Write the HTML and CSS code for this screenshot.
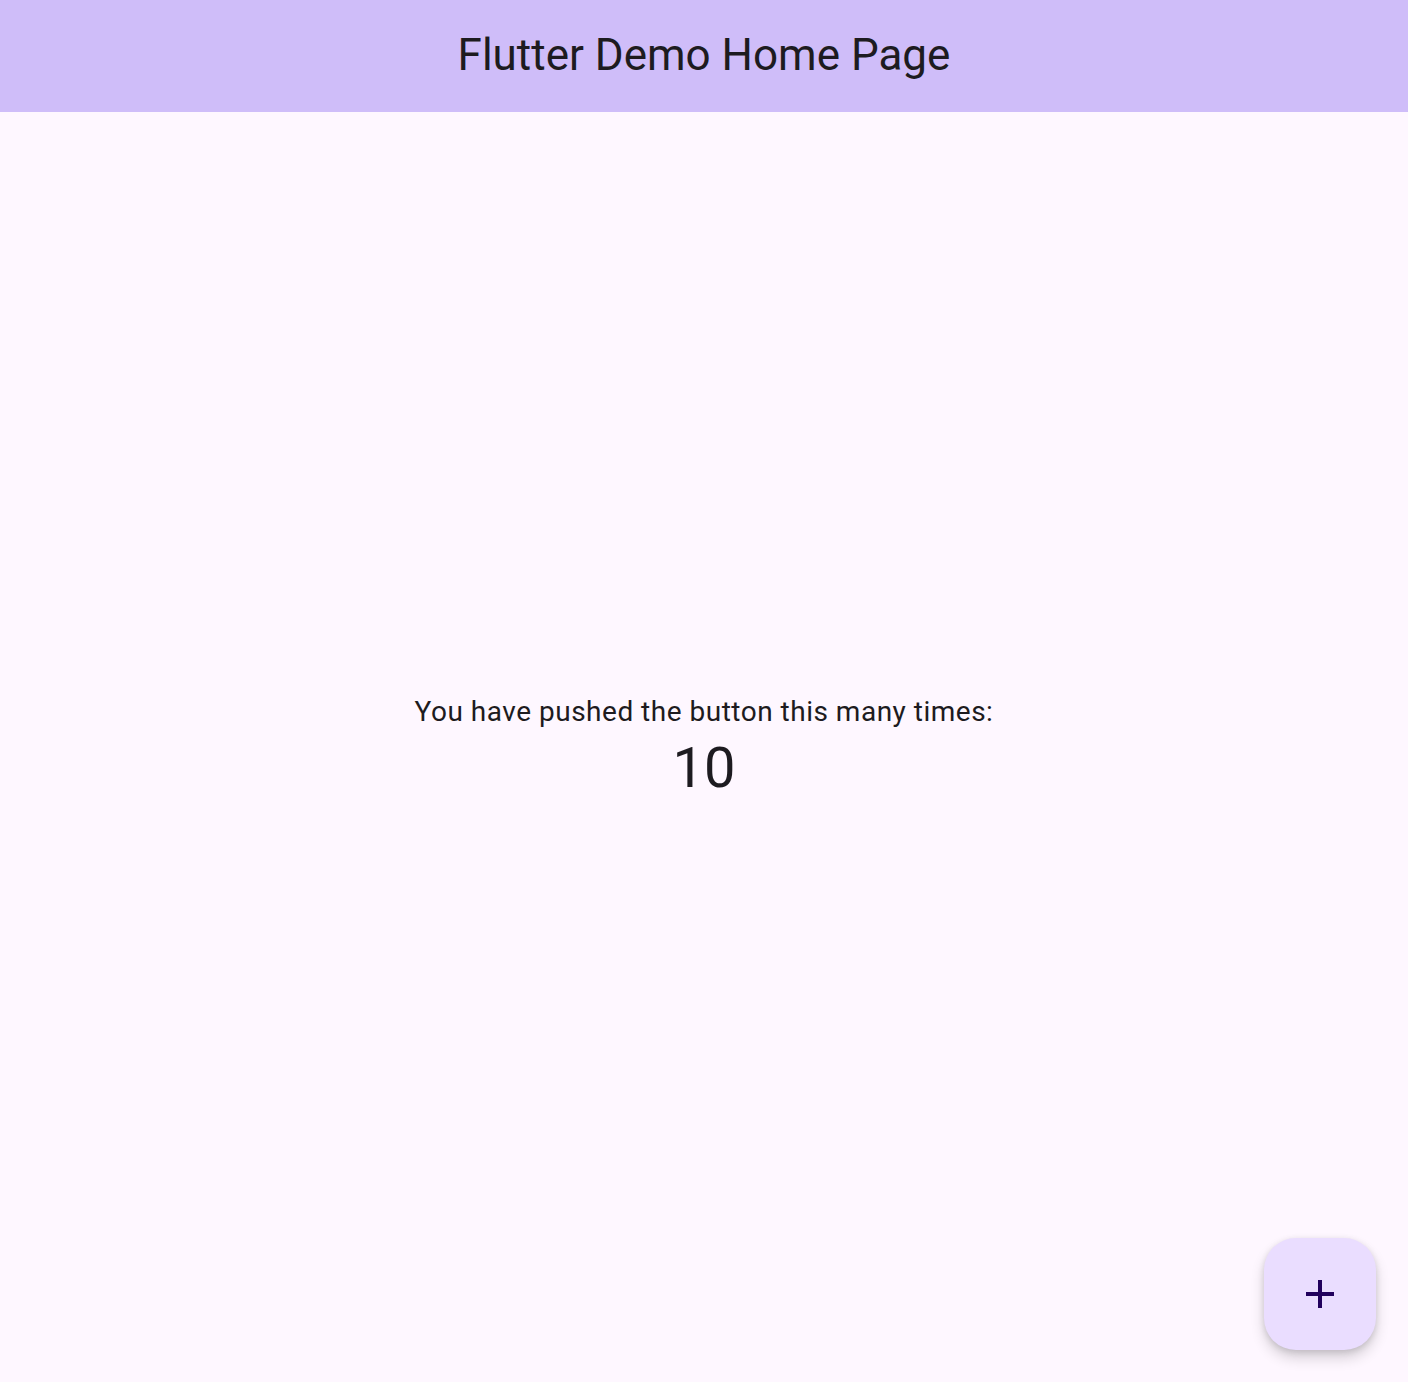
FILE: index.html
```html
<!DOCTYPE html>
<html lang="en">
<head>
<meta charset="utf-8">
<title>Flutter Demo Home Page</title>
<link rel="stylesheet" href="styles.css">
</head>
<body>
<div class="app">
  <header class="appbar">
    <h1 class="title">Flutter Demo Home Page</h1>
  </header>
  <main class="body">
    <div class="column">
      <p class="label">You have pushed the button this many times:</p>
      <p class="count">10</p>
    </div>
  </main>
  <button class="fab" aria-label="Increment">
    <svg viewBox="0 0 24 24" width="48" height="48"><path d="M19 13h-6v6h-2v-6H5v-2h6V5h2v6h6v2z" fill="#21005D"/></svg>
  </button>
</div>
</body>
</html>
```

FILE: styles.css
```css
html, body {
  margin: 0;
  padding: 0;
  height: 100%;
}
body {
  background: #FEF7FF;
  font-family: Roboto, "Liberation Sans", sans-serif;
  color: #1D1B20;
}
.app {
  position: relative;
  display: flex;
  flex-direction: column;
  height: 100vh;
}
.appbar {
  height: 112px;
  flex: none;
  background: #CFBDF9;
  display: flex;
  align-items: center;
  justify-content: center;
}
.title {
  margin: 0 0 2px;
  font-weight: 400;
  font-size: 44px;
  line-height: 56px;
}
.body {
  flex: 1;
  display: flex;
  align-items: center;
  justify-content: center;
  padding-top: 2px;
}
.column {
  display: flex;
  flex-direction: column;
  align-items: center;
}
.label {
  margin: 0;
  font-size: 28px;
  line-height: 40px;
  letter-spacing: 0.5px;
}
.count {
  margin: 0;
  font-size: 56px;
  line-height: 72px;
}
.fab {
  position: absolute;
  right: 32px;
  bottom: 32px;
  width: 112px;
  height: 112px;
  border: none;
  border-radius: 32px;
  background: #EADDFF;
  display: flex;
  align-items: center;
  justify-content: center;
  padding: 0;
  box-shadow: 0 8px 14px rgba(0,0,0,0.16), 0 2px 6px rgba(0,0,0,0.12);
}
```
